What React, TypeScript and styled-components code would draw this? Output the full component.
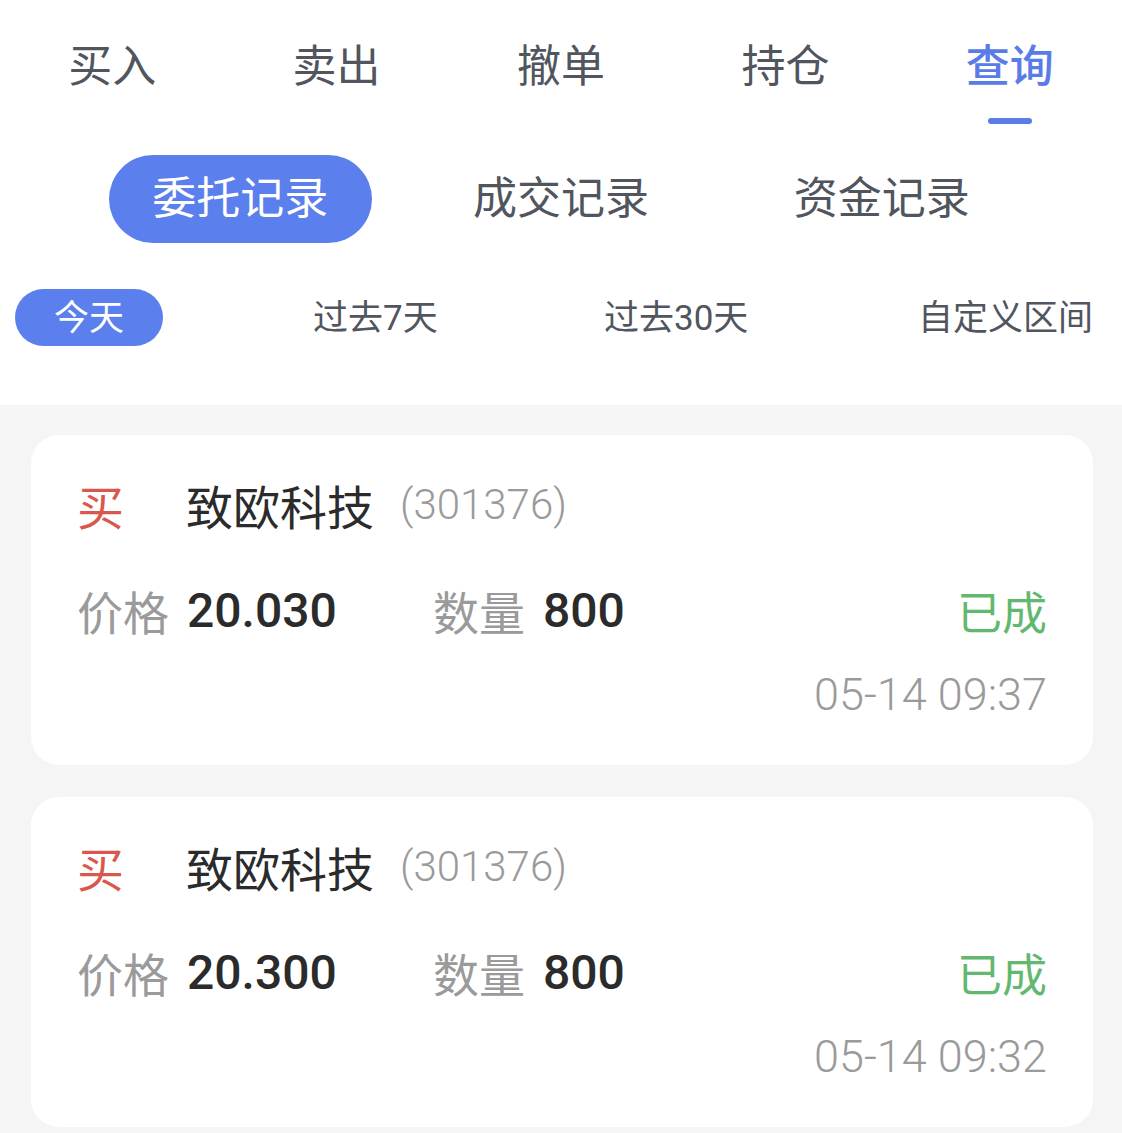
import React from 'react';
import styled, { createGlobalStyle } from 'styled-components';

const GlobalStyle = createGlobalStyle`
  html, body {
    margin: 0;
    padding: 0;
    background: #ffffff;
  }
  body {
    font-family: Roboto, "Noto Sans CJK SC", "Noto Sans", sans-serif;
  }
`;

const Page = styled.div`
  width: 1122px;
  min-height: 1133px;
  background: #f5f5f5;
  display: flex;
  flex-direction: column;
`;

const Header = styled.div`
  background: #ffffff;
  padding-bottom: 59px;
`;

const TopTabs = styled.div`
  display: grid;
  grid-template-columns: repeat(5, 1fr);
  padding-top: 40px;
`;

const TopTab = styled.div<{ $active?: boolean }>`
  display: flex;
  flex-direction: column;
  align-items: center;
  font-size: 44px;
  line-height: 54px;
  color: ${(p) => (p.$active ? '#5a7ce6' : '#50555e')};
  font-weight: ${(p) => (p.$active ? 500 : 400)};
`;

const Indicator = styled.div<{ $show?: boolean }>`
  width: 44px;
  height: 6px;
  border-radius: 3px;
  margin-top: 24px;
  background: ${(p) => (p.$show ? '#5a7ce6' : 'transparent')};
`;

const Segments = styled.div`
  display: grid;
  grid-template-columns: repeat(3, 1fr);
  padding: 0 80px;
  margin-top: 31px;
`;

const Segment = styled.div<{ $active?: boolean }>`
  justify-self: center;
  width: 263px;
  height: 88px;
  box-sizing: border-box;
  padding-bottom: 8px;
  border-radius: 44px;
  display: flex;
  align-items: center;
  justify-content: center;
  font-size: 44px;
  color: ${(p) => (p.$active ? '#ffffff' : '#50555e')};
  background: ${(p) => (p.$active ? '#5b7fed' : 'transparent')};
`;

const Ranges = styled.div`
  display: grid;
  grid-template-columns: 298px 291px 314px auto;
  align-items: center;
  padding-left: 15px;
  margin-top: 46px;
  height: 57px;
`;

const Range = styled.div<{ $active?: boolean }>`
  justify-self: start;
  height: 57px;
  box-sizing: border-box;
  padding-bottom: 6px;
  display: flex;
  align-items: center;
  font-size: 35px;
  color: ${(p) => (p.$active ? '#ffffff' : '#50555e')};
  background: ${(p) => (p.$active ? '#5b7fed' : 'transparent')};
  border-radius: 29px;
  padding-left: ${(p) => (p.$active ? '39px' : '0')};
  padding-right: ${(p) => (p.$active ? '39px' : '0')};
`;

const List = styled.div`
  display: flex;
  flex-direction: column;
  gap: 32px;
  padding: 30px 29px 8px 31px;
`;

const Card = styled.div`
  background: #ffffff;
  border-radius: 28px;
  padding: 39px 46px 46px;
  display: flex;
  flex-direction: column;
`;

const TitleRow = styled.div`
  display: flex;
  align-items: center;
  height: 60px;
`;

const Side = styled.span`
  font-size: 47px;
  color: #d9574c;
  width: 109px;
`;

const Name = styled.span`
  font-size: 47px;
  color: #2b2b2b;
`;

const Code = styled.span`
  font-size: 42px;
  color: #9a9a9a;
  margin-left: 26px;
  font-weight: 300;
`;

const InfoRow = styled.div`
  display: flex;
  align-items: center;
  height: 60px;
  margin-top: 46px;
`;

const Field = styled.div<{ $width?: number }>`
  display: flex;
  align-items: center;
  width: ${(p) => (p.$width ? `${p.$width}px` : 'auto')};
`;

const Label = styled.span`
  font-size: 46px;
  color: #9a9a9a;
`;

const Value = styled.span`
  font-size: 48px;
  font-weight: 500;
  color: #2b2b2b;
  margin-left: 18px;
`;

const Status = styled.span`
  margin-left: auto;
  font-size: 45px;
  color: #63b86f;
`;

const TimeRow = styled.div`
  display: flex;
  justify-content: flex-end;
  height: 50px;
  align-items: center;
  margin-top: 29px;
  font-size: 45px;
  font-weight: 300;
  color: #9a9a9a;
`;

const tabs = ['买入', '卖出', '撤单', '持仓', '查询'];
const segments = ['委托记录', '成交记录', '资金记录'];
const ranges = ['今天', '过去7天', '过去30天', '自定义区间'];

const orders = [
  { side: '买', name: '致欧科技', code: '301376', price: '20.030', qty: '800', status: '已成', time: '05-14 09:37' },
  { side: '买', name: '致欧科技', code: '301376', price: '20.300', qty: '800', status: '已成', time: '05-14 09:32' },
];

export default function App() {
  return (
    <>
      <GlobalStyle />
      <Page>
        <Header>
          <TopTabs>
            {tabs.map((t, i) => (
              <TopTab key={t} $active={i === 4}>
                {t}
                <Indicator $show={i === 4} />
              </TopTab>
            ))}
          </TopTabs>
          <Segments>
            {segments.map((s, i) => (
              <Segment key={s} $active={i === 0}>{s}</Segment>
            ))}
          </Segments>
          <Ranges>
            {ranges.map((r, i) => (
              <Range key={r} $active={i === 0}>{r}</Range>
            ))}
          </Ranges>
        </Header>
        <List>
          {orders.map((o) => (
            <Card key={o.time}>
              <TitleRow>
                <Side>{o.side}</Side>
                <Name>{o.name}</Name>
                <Code>({o.code})</Code>
              </TitleRow>
              <InfoRow>
                <Field $width={356}>
                  <Label>价格</Label>
                  <Value>{o.price}</Value>
                </Field>
                <Field>
                  <Label>数量</Label>
                  <Value>{o.qty}</Value>
                </Field>
                <Status>{o.status}</Status>
              </InfoRow>
              <TimeRow>{o.time}</TimeRow>
            </Card>
          ))}
        </List>
      </Page>
    </>
  );
}
